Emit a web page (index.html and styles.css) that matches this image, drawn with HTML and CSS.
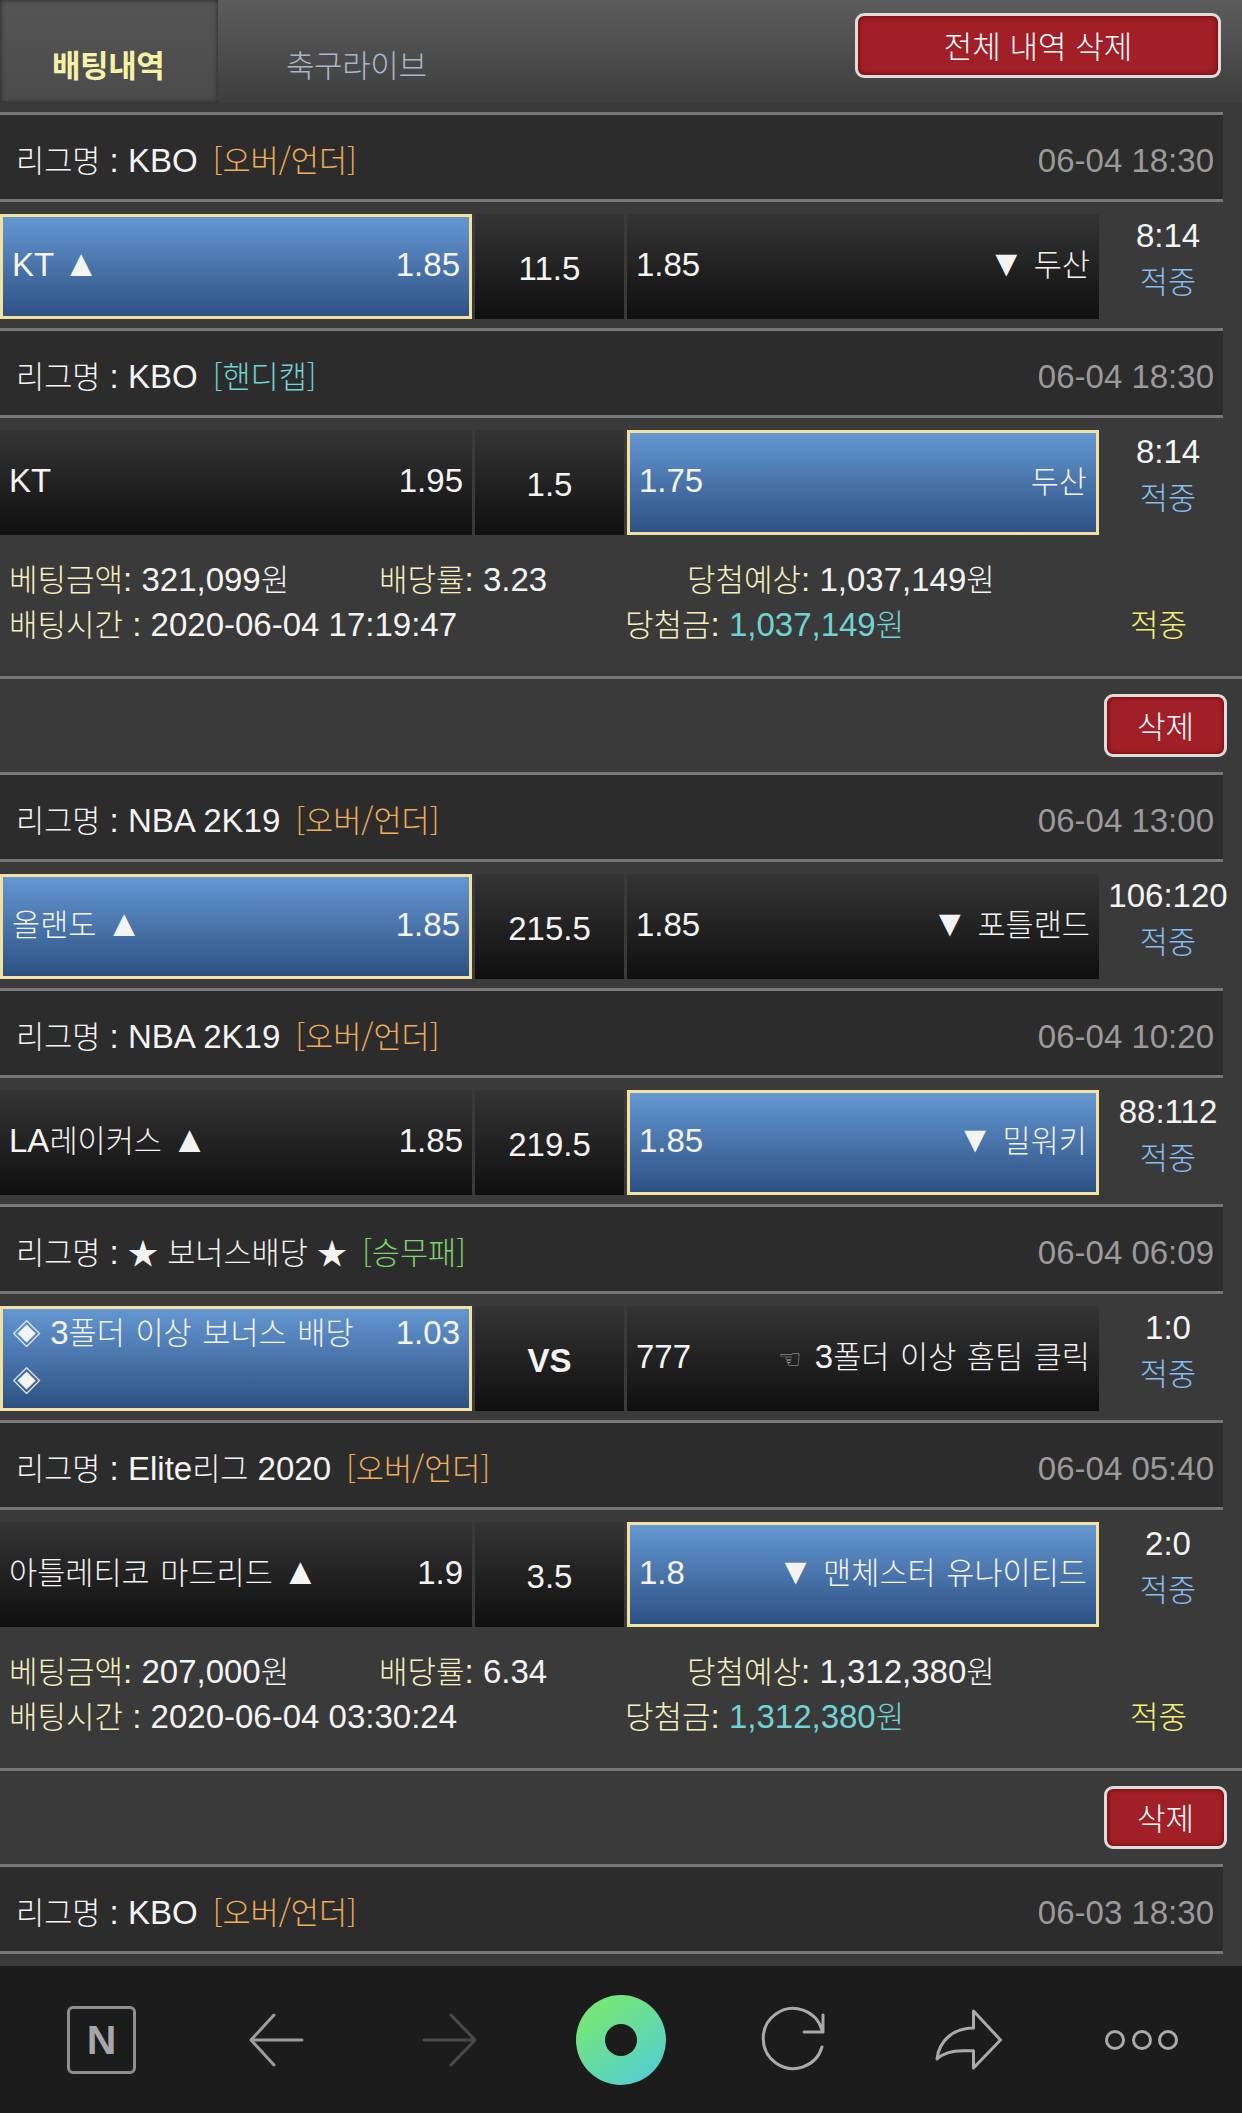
FILE: index.html
```html
<!DOCTYPE html>
<html lang="ko">
<head>
    <meta charset="UTF-8">
    <meta name="viewport" content="width=device-width, initial-scale=1.0">
    <title>배팅내역</title>
    <link rel="stylesheet" href="styles.css">
</head>
<body>
    <header class="top">
        <a class="tab tab-active">배팅내역</a>
        <a class="tab">축구라이브</a>
        <button class="del del-all">전체 내역 삭제</button>
    </header>

    <div class="league"><div><span class="ko">리그명</span> : KBO <span class="ko mark over">[오버/언더]</span></div><div class="date">06-04 18:30</div></div>
    <div class="match">
        <div class="side picked"><span>KT <span class="tri">▲</span></span><span>1.85</span></div>
        <div class="line">11.5</div>
        <div class="side"><span>1.85</span><span><span class="tri">▼</span> <span class="ko">두산</span></span></div>
        <div class="score">8:14<br><span class="ko hit">적중</span></div>
    </div>

    <div class="league"><div><span class="ko">리그명</span> : KBO <span class="ko mark handi">[핸디캡]</span></div><div class="date">06-04 18:30</div></div>
    <div class="match">
        <div class="side"><span>KT</span><span>1.95</span></div>
        <div class="line">1.5</div>
        <div class="side picked"><span>1.75</span><span class="ko">두산</span></div>
        <div class="score">8:14<br><span class="ko hit">적중</span></div>
    </div>

    <div class="info">
        <div class="info-row">
            <div class="c-amount"><span class="ko label">베팅금액</span><span class="label">:</span> 321,099<span class="ko">원</span></div>
            <div class="c-rate"><span class="ko label">배당률</span><span class="label">:</span> 3.23</div>
            <div><span class="ko label">당첨예상</span><span class="label">:</span> 1,037,149<span class="ko">원</span></div>
        </div>
        <div class="info-row">
            <div class="c-time"><span class="ko label">배팅시간</span><span class="label"> :</span> 2020-06-04 17:19:47</div>
            <div class="c-win"><span class="ko label">당첨금</span><span class="label">:</span> <span class="won">1,037,149<span class="ko">원</span></span></div>
            <div class="result"><span class="ko">적중</span></div>
        </div>
    </div>
    <div class="del-row"><button class="del">삭제</button></div>

    <div class="league"><div><span class="ko">리그명</span> : NBA 2K19 <span class="ko mark over">[오버/언더]</span></div><div class="date">06-04 13:00</div></div>
    <div class="match">
        <div class="side picked"><span><span class="ko">올랜도</span> <span class="tri">▲</span></span><span>1.85</span></div>
        <div class="line">215.5</div>
        <div class="side"><span>1.85</span><span><span class="tri">▼</span> <span class="ko">포틀랜드</span></span></div>
        <div class="score">106:120<br><span class="ko hit">적중</span></div>
    </div>

    <div class="league"><div><span class="ko">리그명</span> : NBA 2K19 <span class="ko mark over">[오버/언더]</span></div><div class="date">06-04 10:20</div></div>
    <div class="match">
        <div class="side"><span>LA<span class="ko">레이커스</span> <span class="tri">▲</span></span><span>1.85</span></div>
        <div class="line">219.5</div>
        <div class="side picked"><span>1.85</span><span><span class="tri">▼</span> <span class="ko">밀워키</span></span></div>
        <div class="score">88:112<br><span class="ko hit">적중</span></div>
    </div>

    <div class="league"><div><span class="ko">리그명</span> : <span class="star">★</span> <span class="ko">보너스배당</span> <span class="star">★</span> <span class="ko mark wdl">[승무패]</span></div><div class="date">06-04 06:09</div></div>
    <div class="match">
        <div class="side picked side-top"><span><span class="dia">◈</span> 3<span class="ko">폴더 이상 보너스 배당</span><br><span class="dia">◈</span></span><span>1.03</span></div>
        <div class="line line-vs">VS</div>
        <div class="side"><span>777</span><span><span class="hand">☜</span> 3<span class="ko">폴더 이상 홈팀 클릭</span></span></div>
        <div class="score">1:0<br><span class="ko hit">적중</span></div>
    </div>

    <div class="league"><div><span class="ko">리그명</span> : Elite<span class="ko">리그</span> 2020 <span class="ko mark over">[오버/언더]</span></div><div class="date">06-04 05:40</div></div>
    <div class="match">
        <div class="side"><span><span class="ko">아틀레티코 마드리드</span> <span class="tri">▲</span></span><span>1.9</span></div>
        <div class="line">3.5</div>
        <div class="side picked"><span>1.8</span><span><span class="tri">▼</span> <span class="ko">맨체스터 유나이티드</span></span></div>
        <div class="score">2:0<br><span class="ko hit">적중</span></div>
    </div>

    <div class="info">
        <div class="info-row">
            <div class="c-amount"><span class="ko label">베팅금액</span><span class="label">:</span> 207,000<span class="ko">원</span></div>
            <div class="c-rate"><span class="ko label">배당률</span><span class="label">:</span> 6.34</div>
            <div><span class="ko label">당첨예상</span><span class="label">:</span> 1,312,380<span class="ko">원</span></div>
        </div>
        <div class="info-row">
            <div class="c-time"><span class="ko label">배팅시간</span><span class="label"> :</span> 2020-06-04 03:30:24</div>
            <div class="c-win"><span class="ko label">당첨금</span><span class="label">:</span> <span class="won">1,312,380<span class="ko">원</span></span></div>
            <div class="result"><span class="ko">적중</span></div>
        </div>
    </div>
    <div class="del-row"><button class="del">삭제</button></div>

    <div class="league"><div><span class="ko">리그명</span> : KBO <span class="ko mark over">[오버/언더]</span></div><div class="date">06-03 18:30</div></div>

    <nav class="nav">
        <div class="nav-item"><div class="n-box">N</div></div>
        <div class="nav-item">
            <svg width="60" height="60" viewBox="0 0 60 60" class="ico"><path d="M57 30H6M29 5L6 30L29 55"/></svg>
        </div>
        <div class="nav-item">
            <svg width="60" height="60" viewBox="0 0 60 60" class="ico ico-off"><path d="M6 30H57M33 5L57 30L33 55"/></svg>
        </div>
        <div class="nav-item"><div class="whale"></div></div>
        <div class="nav-item">
            <svg width="70" height="70" viewBox="0 0 70 70" class="ico ico-thin"><path d="M63 42A30 30 0 1 1 63 25M64 10V27H45"/></svg>
        </div>
        <div class="nav-item">
            <svg width="70" height="70" viewBox="0 0 70 70" class="ico ico-thin"><path d="M5 54C7 36 21 23 41.5 23V6L68.5 35L41.5 63V45.7H31C19 45.7 11 48 5 54Z"/></svg>
        </div>
        <div class="nav-item">
            <svg width="80" height="24" viewBox="0 0 80 24" class="ico ico-thin"><circle cx="15" cy="12" r="8.5"/><circle cx="42" cy="12" r="8.5"/><circle cx="68" cy="12" r="8.5"/></svg>
        </div>
    </nav>
</body>
</html>
```

FILE: styles.css
```css
body { margin: 0; background: #3a3a3a; color: #f4f4f4; font-family: "Liberation Sans", "Noto Sans CJK KR", sans-serif; font-size: 33px; line-height: 38px; }
.ko { font-family: "Noto Sans CJK KR", "Liberation Sans", sans-serif; font-size: 30.6px; font-weight: 300; line-height: 1; word-spacing: 2px; }

.top { display: flex; height: 103px; margin-bottom: 9px; background: linear-gradient(#5c5c5c, #3e3e3e); position: relative; }
.tab { font-family: "Noto Sans CJK KR", sans-serif; font-size: 31px; font-weight: 300; color: #a9b5c9; padding: 43px 0 0 68px; line-height: 42px; letter-spacing: -0.4px; }
.tab-active { width: 218px; box-sizing: border-box; padding-left: 52px; font-weight: 700; color: #f6f3a8; background: linear-gradient(#555, #4b4b4b); box-shadow: inset 0 0 5px #222; }

.del { font-family: "Noto Sans CJK KR", sans-serif; font-size: 31px; font-weight: 300; color: #fff; background: #a11f26; border: 3px solid #ddd; border-radius: 9px; box-shadow: inset 0 0 5px #600; padding: 0 0 3px; }
.del-all { margin: 13px 21px 0 auto; width: 366px; height: 65px; }
.del-row { display: flex; justify-content: flex-end; height: 93px; padding: 15px 15px 0 0; box-sizing: border-box; }
.del-row .del { width: 123px; height: 63px; }

.league { display: flex; justify-content: space-between; align-items: center; width: 1223px; height: 90px; box-sizing: border-box; padding: 7px 9px 0 16px; background: #2c2c2c; border-top: 3px solid #777; border-bottom: 3px solid #777; }
.mark { margin-left: 6px; }
.over { color: #f0ad58; }
.handi { color: #70d3d3; }
.wdl { color: #7fd26d; }
.date { color: #9a9a9a; }
.star { font-size: 30px; line-height: 1; }

.match { display: flex; gap: 3px; padding: 12px 0 9px; }
.side { display: flex; justify-content: space-between; align-items: center; width: 472px; height: 105px; box-sizing: border-box; padding: 0 9px 4px; background: linear-gradient(#353535, #0f0f0f); line-height: 47px; }
.picked { padding: 0 9px 4px; border: 3px solid #f3e1a2; background: linear-gradient(#6497d2, #2e5183); }
.side-top { align-items: flex-start; padding-top: 0; }
.tri { font-size: 37px; line-height: 1; }
.dia { font-size: 29px; line-height: 1; }
.line { display: flex; justify-content: center; align-items: center; width: 149px; height: 105px; padding-top: 4px; box-sizing: border-box; background: linear-gradient(#353535, #0f0f0f); }
.line-vs { font-weight: 700; }
.hand { font-family: "DejaVu Sans", sans-serif; font-size: 26px; line-height: 1; color: #aaa; margin-right: 4px; }
.score { width: 136px; text-align: center; line-height: 46px; margin-left: -2px; margin-top: -1px; }
.hit { color: #85bdf0; }

.info { height: 135px; box-sizing: border-box; padding-top: 13px; border-bottom: 3px solid #777; }
.info .ko { font-size: 31px; }
.info-row { display: flex; height: 45px; line-height: 45px; }
.label { color: #f6f1c0; }
.c-amount { width: 370px; padding-left: 9px; }
.c-rate { width: 308px; }
.c-time { width: 616px; padding-left: 9px; }
.c-win { width: 505px; }
.won { color: #70d3d3; }
.result .ko { color: #f4ef70; }

.nav { display: grid; grid-template-columns: repeat(7, 1fr); height: 147px; margin-top: 12px; padding: 0 15px; background: #1c1c1c; }
.nav-item { display: flex; justify-content: center; align-items: center; }
.ico { fill: none; stroke: #9c9ca0; stroke-width: 3; stroke-linecap: round; stroke-linejoin: round; }
.ico-off { stroke: #4a4a4a; }
.ico-thin { stroke: #aaaaae; stroke-width: 3; }
.n-box { display: flex; justify-content: center; align-items: center; width: 69px; height: 68px; box-sizing: border-box; border: 3px solid #8f8f93; border-radius: 6px; color: #a6a6ac; font-weight: 700; font-size: 41px; }
.whale { display: flex; justify-content: center; align-items: center; width: 90px; height: 90px; border-radius: 50%; background: linear-gradient(145deg, #74e57a 20%, #56d0cc 85%); }
.whale::after { content: ""; width: 32px; height: 32px; border-radius: 50%; background: #1c1c1c; }
```
